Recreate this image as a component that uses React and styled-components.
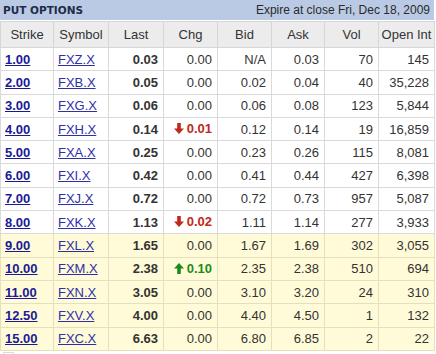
import React from "react";
import styled, { createGlobalStyle } from "styled-components";

const GlobalStyle = createGlobalStyle`
  html, body {
    margin: 0;
    padding: 0;
    background: #ffffff;
  }
  body {
    font-family: "Liberation Sans", Arial, sans-serif;
  }
`;

const ROWS = [
  { strike: "1.00", symbol: "FXZ.X", last: "0.03", chg: "0.00", bid: "N/A", ask: "0.03", vol: "70", oi: "145" },
  { strike: "2.00", symbol: "FXB.X", last: "0.05", chg: "0.00", bid: "0.02", ask: "0.04", vol: "40", oi: "35,228" },
  { strike: "3.00", symbol: "FXG.X", last: "0.06", chg: "0.00", bid: "0.06", ask: "0.08", vol: "123", oi: "5,844" },
  { strike: "4.00", symbol: "FXH.X", last: "0.14", chg: "0.01", dir: "down", bid: "0.12", ask: "0.14", vol: "19", oi: "16,859" },
  { strike: "5.00", symbol: "FXA.X", last: "0.25", chg: "0.00", bid: "0.23", ask: "0.26", vol: "115", oi: "8,081" },
  { strike: "6.00", symbol: "FXI.X", last: "0.42", chg: "0.00", bid: "0.41", ask: "0.44", vol: "427", oi: "6,398" },
  { strike: "7.00", symbol: "FXJ.X", last: "0.72", chg: "0.00", bid: "0.72", ask: "0.73", vol: "957", oi: "5,087" },
  { strike: "8.00", symbol: "FXK.X", last: "1.13", chg: "0.02", dir: "down", bid: "1.11", ask: "1.14", vol: "277", oi: "3,933" },
  { strike: "9.00", symbol: "FXL.X", last: "1.65", chg: "0.00", bid: "1.67", ask: "1.69", vol: "302", oi: "3,055", itm: true },
  { strike: "10.00", symbol: "FXM.X", last: "2.38", chg: "0.10", dir: "up", bid: "2.35", ask: "2.38", vol: "510", oi: "694", itm: true },
  { strike: "11.00", symbol: "FXN.X", last: "3.05", chg: "0.00", bid: "3.10", ask: "3.20", vol: "24", oi: "310", itm: true },
  { strike: "12.50", symbol: "FXV.X", last: "4.00", chg: "0.00", bid: "4.40", ask: "4.50", vol: "1", oi: "132", itm: true },
  { strike: "15.00", symbol: "FXC.X", last: "6.63", chg: "0.00", bid: "6.80", ask: "6.85", vol: "2", oi: "22", itm: true },
];

const Panel = styled.div`
  width: 434px;
`;

const TitleBar = styled.div`
  display: flex;
  align-items: center;
  justify-content: space-between;
  height: 20px;
  padding: 0 4px 0 3px;
  background: #bacae4;
`;

const Title = styled.span`
  font-family: "DejaVu Sans", Verdana, sans-serif;
  font-weight: bold;
  font-size: 10.5px;
  color: #1f2b48;
`;

const Expiry = styled.span`
  font-size: 12px;
  color: #2a2a2a;
`;

const Grid = styled.table`
  width: 434px;
  border-collapse: collapse;
  table-layout: fixed;
  margin-top: 1px;
  font-size: 13px;
`;

const HeadCell = styled.th`
  height: 25px;
  padding: 0;
  background: #ececec;
  border: 1px solid #d6d6d6;
  font-weight: normal;
  color: #333;
  text-align: center;
`;

const Row = styled.tr`
  background: ${(p) => (p.$itm ? "#fffbd8" : "#ffffff")};
`;

const Cell = styled.td`
  height: 22.3px;
  padding: 0 5px 0 4px;
  border: 1px solid ${(p) => (p.$itm ? "#e4dfbd" : "#dadada")};
  text-align: ${(p) => (p.$left ? "left" : "right")};
  color: #333;
  font-weight: ${(p) => (p.$bold ? "bold" : "normal")};
  white-space: nowrap;
`;

const StrikeLink = styled.a`
  color: #1a1a96;
  font-weight: bold;
  text-decoration: underline;
`;

const SymbolLink = styled.a`
  color: #2f2fa8;
  text-decoration: underline;
`;

const Change = styled.span`
  display: inline-flex;
  align-items: center;
  gap: 3px;
  color: ${(p) => (p.$dir === "down" ? "#c0281a" : p.$dir === "up" ? "#1e8a1e" : "#333")};
  font-weight: ${(p) => (p.$dir ? "bold" : "normal")};
`;

const Placeholder = styled.div`
  width: 9px;
  height: 4px;
  margin: 1px 0 0 3px;
  border: 1px solid #dcdcdc;
  border-bottom: none;
`;

const Arrow = ({ dir }) => (
  <svg width="10" height="11" viewBox="0 0 10 11">
    {dir === "down" ? (
      <path d="M3.2 0h3.6v5.5H10L5 11 0 5.5h3.2z" fill="#c0281a" />
    ) : (
      <path d="M3.2 11h3.6V5.5H10L5 0 0 5.5h3.2z" fill="#1e8a1e" />
    )}
  </svg>
);

const COLUMNS = ["Strike", "Symbol", "Last", "Chg", "Bid", "Ask", "Vol", "Open Int"];

export default function App() {
  return (
    <>
      <GlobalStyle />
      <Panel>
        <TitleBar>
          <Title>PUT OPTIONS</Title>
          <Expiry>Expire at close Fri, Dec 18, 2009</Expiry>
        </TitleBar>
        <Grid>
          <colgroup>
            <col style={{ width: 53 }} />
            <col style={{ width: 55 }} />
            <col style={{ width: 55 }} />
            <col style={{ width: 54 }} />
            <col style={{ width: 54 }} />
            <col style={{ width: 53 }} />
            <col style={{ width: 54 }} />
            <col style={{ width: 56 }} />
          </colgroup>
          <thead>
            <tr>
              {COLUMNS.map((c) => (
                <HeadCell key={c}>{c}</HeadCell>
              ))}
            </tr>
          </thead>
          <tbody>
            {ROWS.map((r) => (
              <Row key={r.strike} $itm={r.itm}>
                <Cell $left $itm={r.itm}>
                  <StrikeLink href="#">{r.strike}</StrikeLink>
                </Cell>
                <Cell $left $itm={r.itm}>
                  <SymbolLink href="#">{r.symbol}</SymbolLink>
                </Cell>
                <Cell $bold $itm={r.itm}>{r.last}</Cell>
                <Cell $itm={r.itm}>
                  <Change $dir={r.dir}>
                    {r.dir && <Arrow dir={r.dir} />}
                    {r.chg}
                  </Change>
                </Cell>
                <Cell $itm={r.itm}>{r.bid}</Cell>
                <Cell $itm={r.itm}>{r.ask}</Cell>
                <Cell $itm={r.itm}>{r.vol}</Cell>
                <Cell $itm={r.itm}>{r.oi}</Cell>
              </Row>
            ))}
          </tbody>
        </Grid>
        <Placeholder />
      </Panel>
    </>
  );
}
